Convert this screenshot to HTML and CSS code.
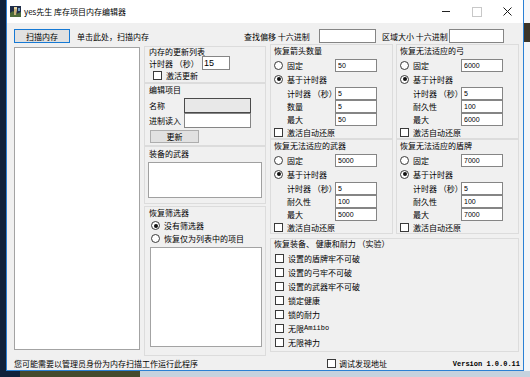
FILE: index.html
```html
<!DOCTYPE html>
<html lang="zh-CN">

<head>
    <meta charset="UTF-8">
    <meta name="viewport" content="width=device-width, initial-scale=1.0">
    <title>yes先生 库存项目内存编辑器</title>
    <link rel="stylesheet" href="styles.css">
</head>

<body>
    <div class="window">
        <!-- title bar -->
        <div class="titlebar">
            <svg class="appicon" width="11" height="11" viewBox="0 0 11 11">
                <rect width="11" height="11" fill="#1f2d48" />
                <path d="M0 7 L3 5 L6 8 L11 6 L11 11 L0 11 Z" fill="#4d6b3a" />
                <path d="M4 1 L7 1 L7 4 L6 9 L4 9 L4 4 Z" fill="#c9b27a" />
                <rect x="4" y="1" width="3" height="2" fill="#e8d9a6" />
                <rect x="8" y="2" width="2" height="3" fill="#6f9ac4" />
            </svg>
            <span class="title">yes先生 库存项目内存编辑器</span>
            <div class="controls">
                <span class="ctl min"></span>
                <span class="ctl max"></span>
                <span class="ctl close">
                    <svg width="9" height="9" viewBox="0 0 9 9">
                        <path d="M0.5 0.5 L8.5 8.5 M8.5 0.5 L0.5 8.5" stroke="#1a1a1a" stroke-width="1" />
                    </svg>
                </span>
            </div>
        </div>

        <div class="client">
            <div class="toolbar">
                <button class="btn scan">扫描内存</button>
                <span class="hint">单击此处，扫描内存</span>
                <span class="flabel offset">查找偏移 十六进制</span>
                <input class="tb find" type="text">
                <span class="flabel size">区域大小 十六进制</span>
                <input class="tb region" type="text">
            </div>

            <div class="main">
                <div class="listbox memlist"></div>

                <!-- middle column -->
                <div class="midcol">
                    <div class="panel p-update">
                        <div class="glabel">内存的更新列表</div>
                        <div class="row">
                            <span class="lbl w-timer">计时器 （秒）</span>
                            <input class="tb timer" type="text" value="15">
                        </div>
                        <div class="check indent"><span class="box"></span>激活更新</div>
                    </div>

                    <div class="panel p-edit">
                        <div class="glabel">编辑项目</div>
                        <div class="row">
                            <span class="lbl w-edit">名称</span>
                            <input class="tb name" type="text" disabled>
                        </div>
                        <div class="row">
                            <span class="lbl w-edit">进制读入</span>
                            <input class="tb hex" type="text">
                        </div>
                        <button class="btn update">更新</button>
                    </div>

                    <div class="panel p-weapons">
                        <div class="glabel">装备的武器</div>
                        <div class="textarea"></div>
                    </div>

                    <div class="panel p-filter">
                        <div class="glabel">恢复筛选器</div>
                        <div class="radio-row"><span class="radio on"></span>没有筛选器</div>
                        <div class="radio-row"><span class="radio"></span>恢复仅为列表中的项目</div>
                        <div class="listbox filterlist"></div>
                    </div>
                </div>

                <!-- right column -->
                <div class="rightcol">
                    <div class="panel rp">
                        <div class="glabel">恢复箭头数量</div>
                        <div class="rrow first"><span class="rcell"><span class="radio"></span>固定</span><input class="tb num" type="text" value="50"></div>
                        <div class="rrow"><span class="rcell"><span class="radio on"></span>基于计时器</span></div>
                        <div class="srow"><span class="scell">计时器 （秒）</span><input class="tb num" type="text" value="5"></div>
                        <div class="srow"><span class="scell">数量</span><input class="tb num" type="text" value="5"></div>
                        <div class="srow"><span class="scell">最大</span><input class="tb num" type="text" value="50"></div>
                        <div class="check"><span class="box"></span>激活自动还原</div>
                    </div>

                    <div class="panel rp">
                        <div class="glabel">恢复无法适应的弓</div>
                        <div class="rrow first"><span class="rcell"><span class="radio"></span>固定</span><input class="tb num" type="text" value="6000"></div>
                        <div class="rrow"><span class="rcell"><span class="radio on"></span>基于计时器</span></div>
                        <div class="srow"><span class="scell">计时器 （秒）</span><input class="tb num" type="text" value="5"></div>
                        <div class="srow"><span class="scell">耐久性</span><input class="tb num" type="text" value="100"></div>
                        <div class="srow"><span class="scell">最大</span><input class="tb num" type="text" value="6000"></div>
                        <div class="check"><span class="box"></span>激活自动还原</div>
                    </div>

                    <div class="panel rp">
                        <div class="glabel">恢复无法适应的武器</div>
                        <div class="rrow first"><span class="rcell"><span class="radio"></span>固定</span><input class="tb num" type="text" value="5000"></div>
                        <div class="rrow"><span class="rcell"><span class="radio on"></span>基于计时器</span></div>
                        <div class="srow"><span class="scell">计时器 （秒）</span><input class="tb num" type="text" value="5"></div>
                        <div class="srow"><span class="scell">耐久性</span><input class="tb num" type="text" value="100"></div>
                        <div class="srow"><span class="scell">最大</span><input class="tb num" type="text" value="5000"></div>
                        <div class="check"><span class="box"></span>激活自动还原</div>
                    </div>

                    <div class="panel rp">
                        <div class="glabel">恢复无法适应的盾牌</div>
                        <div class="rrow first"><span class="rcell"><span class="radio"></span>固定</span><input class="tb num" type="text" value="7000"></div>
                        <div class="rrow"><span class="rcell"><span class="radio on"></span>基于计时器</span></div>
                        <div class="srow"><span class="scell">计时器 （秒）</span><input class="tb num" type="text" value="5"></div>
                        <div class="srow"><span class="scell">耐久性</span><input class="tb num" type="text" value="100"></div>
                        <div class="srow"><span class="scell">最大</span><input class="tb num" type="text" value="7000"></div>
                        <div class="check"><span class="box"></span>激活自动还原</div>
                    </div>

                    <div class="panel p-cheats">
                        <div class="glabel">恢复装备、 健康和耐力 （实验）</div>
                        <div class="check"><span class="box"></span>设置的盾牌牢不可破</div>
                        <div class="check"><span class="box"></span>设置的弓牢不可破</div>
                        <div class="check"><span class="box"></span>设置的武器牢不可破</div>
                        <div class="check"><span class="box"></span>锁定健康</div>
                        <div class="check"><span class="box"></span>锁的耐力</div>
                        <div class="check"><span class="box"></span>无限<span class="latin">Amiibo</span></div>
                        <div class="check"><span class="box"></span>无限神力</div>
                    </div>
                </div>
            </div>

            <div class="status">
                <span class="note">您可能需要以管理员身份为内存扫描工作运行此程序</span>
                <span class="check debug"><span class="box"></span>调试发现地址</span>
                <span class="version">Version 1.0.0.11</span>
            </div>
        </div>
    </div>
</body>

</html>
```

FILE: styles.css
```css
* {
    box-sizing: border-box;
}

body {
    margin: 0;
    width: 530px;
    height: 377px;
    overflow: hidden;
    font-family: "Noto Sans CJK SC", "Noto Sans", sans-serif;
    font-size: 8px;
    color: #000;
    /* bits of desktop around the window */
    background:
        linear-gradient(to right, #10213b 0 20px, #444a2c 20px 140px, #c6d2de 140px) left bottom / 100% 6px no-repeat,
        linear-gradient(#f6f7f9 0 23px, #3b3428 23px 42px, #f3f5f8 42px) right top / 6px 100% no-repeat,
        #10213b;
}

.window {
    margin-left: 6px;
    width: 518px;
    height: 371px;
    display: flex;
    flex-direction: column;
    background: #f0f0f0;
    border: 1px solid #2b80d4;
    border-top: 0;
}

/* Title bar */
.titlebar {
    height: 23px;
    flex-shrink: 0;
    background: #fff;
    display: flex;
    align-items: center;
    padding-left: 3px;
}

.appicon {
    margin-right: 3px;
    flex-shrink: 0;
}

.title {
    line-height: 10px;
}

.controls {
    margin-left: auto;
    display: flex;
    height: 100%;
}

.ctl {
    width: 31px;
    display: flex;
    align-items: center;
    justify-content: center;
}

.min::before {
    content: "";
    width: 8px;
    height: 1px;
    background: #222;
}

.max::before {
    content: "";
    width: 8px;
    height: 8px;
    border: 1px solid #c8c8c8;
}

/* Client area */
.client {
    flex: 1;
    display: flex;
    flex-direction: column;
    padding: 6px 2px 0 7px;
}

.toolbar {
    height: 14px;
    display: flex;
    align-items: center;
}

.btn {
    margin: 0;
    padding: 0;
    font: 8px "Noto Sans CJK SC", sans-serif;
    background: #e1e1e1;
    border: 1px solid #adadad;
    color: #000;
}

.scan {
    width: 56px;
    height: 14px;
    border-color: #1679d4;
}

.hint {
    margin-left: 7px;
    width: 167px;
}

.flabel {
    white-space: nowrap;
}

.offset {
    width: 75px;
}

.size {
    margin-left: 6px;
    width: 67px;
}

.tb {
    margin: 0;
    height: 13px;
    padding: 0 2px;
    border: 1px solid #858585;
    background: #fff;
    font: 7px "Liberation Sans", sans-serif;
    color: #000;
    outline: none;
}

.find {
    width: 57px;
    height: 14px;
}

.region {
    width: 55px;
    height: 14px;
}

.main {
    margin-top: 1px;
    height: 313px;
    display: grid;
    grid-template-columns: 126px 122px 249px;
    column-gap: 4px;
}

.listbox {
    background: #fff;
    border: 1px solid #a3a3a3;
}

.memlist {
    margin-top: 3px;
    height: 303px;
}

/* Panels */
.panel {
    border: 1px solid #dcdcdc;
}

.glabel {
    height: 8px;
    line-height: 8px;
    white-space: nowrap;
}

.row {
    display: flex;
    align-items: center;
}

.lbl {
    white-space: nowrap;
}

.check,
.radio-row {
    display: flex;
    align-items: center;
    white-space: nowrap;
}

.box,
.radio {
    width: 9px;
    height: 9px;
    flex-shrink: 0;
    background: #fff;
    border: 1px solid #3a3a3a;
    margin-right: 4px;
}

.radio {
    border-radius: 50%;
    display: flex;
    align-items: center;
    justify-content: center;
}

.radio.on::after {
    content: "";
    width: 4px;
    height: 4px;
    border-radius: 50%;
    background: #111;
}

/* middle column */
.midcol {
    display: flex;
    flex-direction: column;
}

.p-update {
    margin-top: 2px;
    height: 37px;
    padding: 0 0 0 4px;
}

.p-update .glabel {
    margin-top: 1px;
}

.p-update .row {
    height: 14px;
}

.w-timer {
    width: 53px;
}

.timer {
    width: 28px;
    height: 14px;
    font-size: 9px;
    padding-left: 1px;
}

.check.indent {
    height: 10px;
    padding-left: 4px;
}

.p-edit {
    height: 63px;
    padding: 2px 0 0 4px;
}

.p-edit .glabel {
    margin-bottom: 4px;
}

.p-edit .row {
    height: 15px;
}

.w-edit {
    width: 35px;
}

.name,
.hex {
    width: 67px;
    height: 15px;
}

.name {
    background: #e8e8e8;
    border-color: #4a4a4a;
}

.update {
    width: 49px;
    height: 13px;
    margin: 2px 0 0 1px;
}

.p-weapons {
    height: 58px;
    padding: 3px 0 0 4px;
}

.textarea {
    margin: 4px 0 0 -1px;
    width: 114px;
    height: 36px;
    background: #fff;
    border: 1px solid #a0a0a0;
}

.p-filter {
    margin-top: 2px;
    height: 150px;
    padding: 1px 0 0 4px;
}

.p-filter .glabel {
    margin-top: 1px;
    margin-bottom: 2px;
}

.radio-row {
    height: 13px;
    padding-left: 2px;
}

.filterlist {
    margin: 2px 0 0 1px;
    width: 112px;
    height: 100px;
}

/* right column */
.rightcol {
    display: grid;
    grid-template-columns: 123px 123px;
    grid-template-rows: 95px 95px 118px;
    column-gap: 3px;
    row-gap: 0;
    align-content: start;
}

.rp {
    padding: 2px 0 0 3px;
}

.rp + .rp:nth-child(3) {
    margin-top: 0;
}

.rrow,
.srow {
    display: grid;
    grid-template-columns: 61px 42px;
    align-items: center;
}

.rrow {
    height: 14px;
}

.rrow.first {
    margin-top: 3px;
}

.srow {
    height: 13px;
}

.rrow:nth-of-type(3) {
    margin-bottom: 1px;
}

.rcell {
    display: flex;
    align-items: center;
    white-space: nowrap;
}

.scell {
    padding-left: 13px;
    white-space: nowrap;
}

.num {
    width: 42px;
}

.rp .check {
    height: 12px;
}

.p-cheats {
    grid-column: 1 / 3;
    margin-top: 4px;
    padding: 0 0 0 3px;
}

.p-cheats .glabel {
    margin-top: 1px;
    margin-bottom: 3px;
}

.p-cheats .check {
    height: 14px;
    padding-left: 1px;
}

.latin {
    font-family: "Liberation Mono", monospace;
    font-size: 7px;
}

/* status line */
.status {
    height: 13px;
    display: flex;
    align-items: center;
}

.note {
    width: 313px;
    white-space: nowrap;
}

.debug .box {
    margin-right: 3px;
}

.version {
    margin-left: auto;
    padding-right: 1px;
    font: bold 7px "Liberation Mono", monospace;
}
```
